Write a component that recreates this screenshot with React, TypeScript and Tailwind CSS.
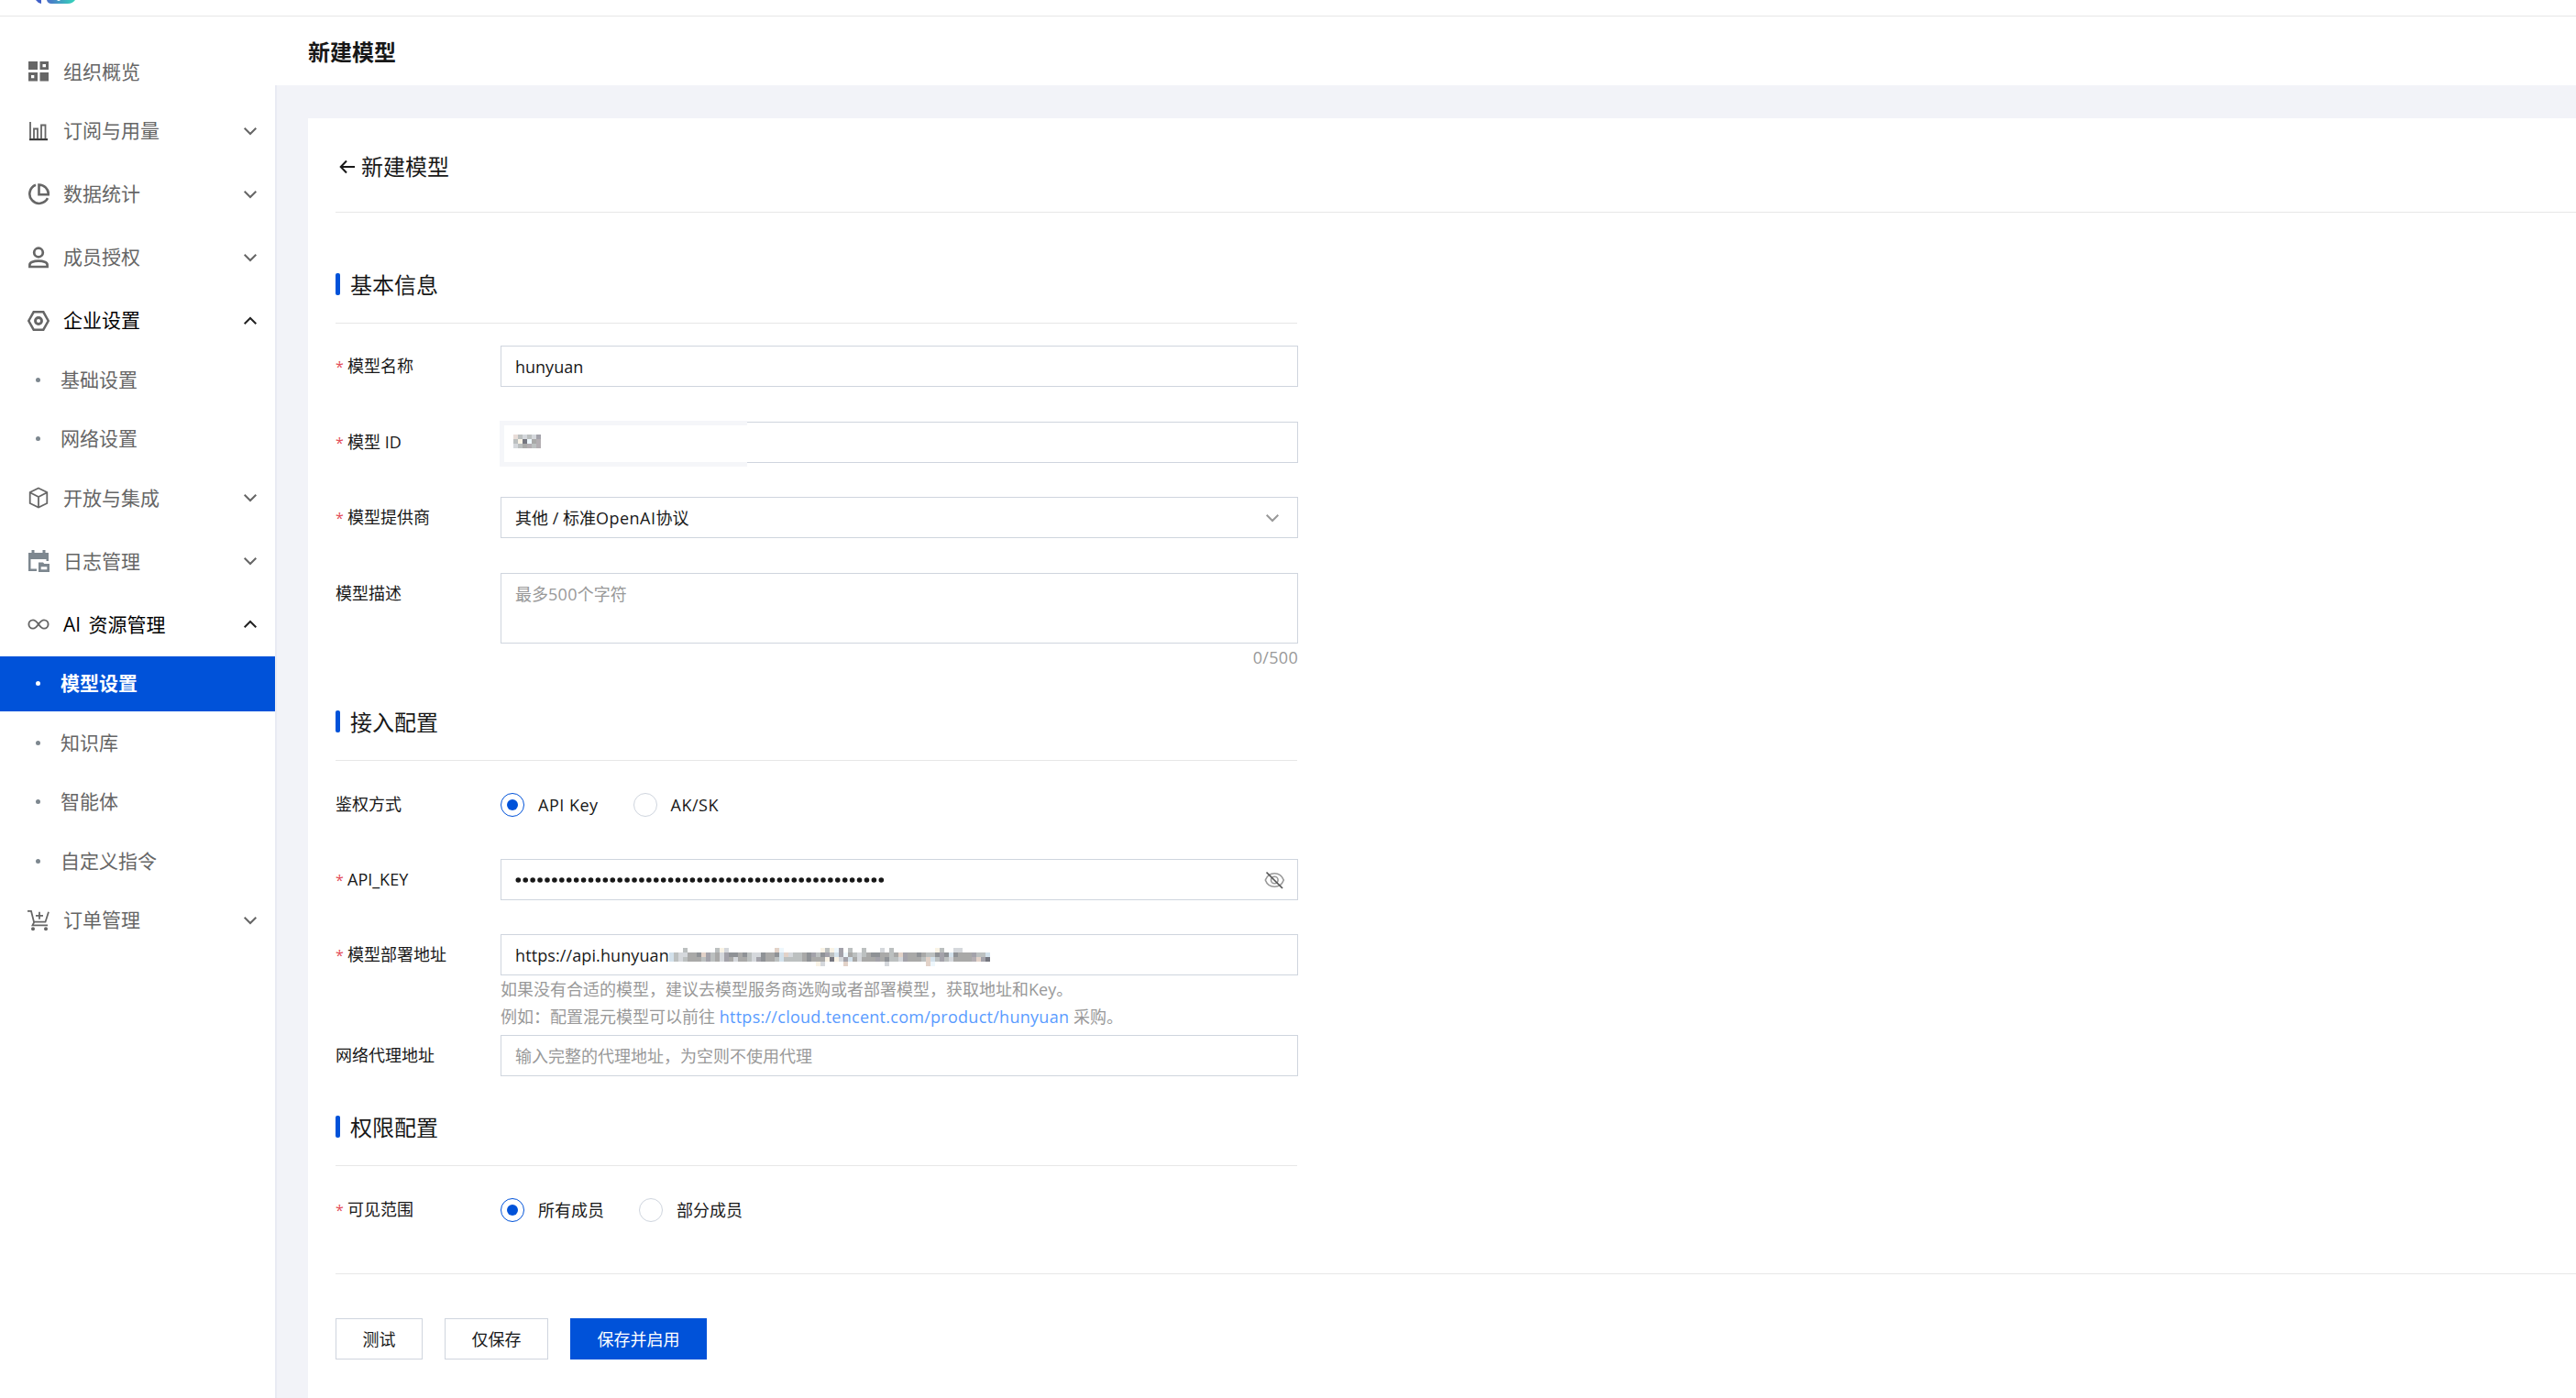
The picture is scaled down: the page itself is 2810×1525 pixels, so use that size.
import { useState, type ReactNode } from 'react'

type IconProps = { className?: string }

const Chevron = ({ up, className = '' }: { up?: boolean; className?: string }) => (
  <svg width="16" height="10" viewBox="0 0 16 10" fill="none" stroke="currentColor" strokeWidth="2" className={className}>
    <path d={up ? 'M1.7 8.2 8 2l6.3 6.2' : 'M1.7 1.8 8 8l6.3-6.2'} />
  </svg>
)

const OverviewIcon = ({ className }: IconProps) => (
  <svg width="24" height="24" viewBox="0 0 24 24" fill="currentColor" fillRule="evenodd" className={className}>
    <path d="M1 1h10v9H1zM13.500 1H23v9h-9.500zM16.500 4v3.300h3.500V4zM1 13h10v9.500H1zM4 16v3.300h3.300V16zM13.500 13H23v9.500h-9.500z" />
  </svg>
)

const UsageIcon = ({ className }: IconProps) => (
  <svg width="24" height="24" viewBox="0 0 24 24" fill="none" stroke="currentColor" strokeWidth="1.8" className={className}>
    <path d="M3 2v19h19M7 21V9.500h4V21M15 21V5.500h4.500V21" />
    <path d="M2 21.300h20" stroke="#333" />
  </svg>
)

const StatsIcon = ({ className }: IconProps) => (
  <svg width="24" height="24" viewBox="0 0 24 24" fill="none" stroke="currentColor" strokeWidth="2.6" className={className}>
    <path d="M9 1.800A10.400 10.400 0 1 0 22 16.200" />
    <path d="M12.500 1.500v10.700h10.400A10.600 10.600 0 0 0 12.500 1.500z" />
  </svg>
)

const MemberIcon = ({ className }: IconProps) => (
  <svg width="24" height="24" viewBox="0 0 24 24" fill="none" stroke="currentColor" strokeWidth="2.700" className={className}>
    <circle cx="12" cy="6.500" r="4.800" />
    <path d="M2.400 22v-2.200c0-2.600 4.300-4.200 9.600-4.200s9.600 1.600 9.600 4.200V22z" />
  </svg>
)

const SettingIcon = ({ className }: IconProps) => (
  <svg width="24" height="24" viewBox="0 0 24 24" fill="none" stroke="currentColor" strokeWidth="2.500" className={className}>
    <path d="M6.700 2.300h10.600L22.700 12l-5.400 9.700H6.700L1.300 12z" />
    <circle cx="12" cy="12" r="3.500" strokeWidth="2.900" />
  </svg>
)

const CubeIcon = ({ className }: IconProps) => (
  <svg width="24" height="24" viewBox="0 0 24 24" fill="none" stroke="currentColor" strokeWidth="1.800" className={className}>
    <path d="M12 1.500 21.300 6v12L12 22.500 2.700 18V6zM2.700 6.300 12 11l9.300-4.700M12 11v11.500" />
  </svg>
)

const LogIcon = ({ className }: IconProps) => (
  <svg width="24" height="24" viewBox="0 0 24 24" fill="#7d878f" className={className}>
    <path d="M1 3h3.500V0h3v3h9V0h3v3H23v9h-2.500V10h-17v10.500H10V23H1z" />
    <path fillRule="evenodd" d="M12 13.500h5l1.300 1.500H24v9H12zM14.700 18.200v3h6.600v-3z" />
  </svg>
)

const InfinityIcon = ({ className }: IconProps) => (
  <svg width="24" height="24" viewBox="0 0 24 24" fill="none" stroke="currentColor" strokeWidth="1.900" className={className}>
    <path d="M12 12c-2-2.800-3.600-4.600-6-4.600a4.600 4.600 0 0 0 0 9.200c2.400 0 4-1.800 6-4.600s3.600-4.600 6-4.600a4.600 4.600 0 0 1 0 9.200c-2.400 0-4-1.800-6-4.600z" />
  </svg>
)

const OrderIcon = ({ className }: IconProps) => (
  <svg width="24" height="24" viewBox="0 0 24 24" fill="none" stroke="currentColor" strokeWidth="1.800" className={className}>
    <path d="M0 1.800h4L7 13.700h12.500L23 2.800M7.400 13.700 5.500 17.300H22M13 2.800v8M9 6.800h8" />
    <circle cx="6" cy="21.300" r="2" fill="currentColor" stroke="none" />
    <circle cx="20" cy="21.300" r="2" fill="currentColor" stroke="none" />
  </svg>
)

const EyeOffIcon = () => (
  <svg width="24" height="24" viewBox="0 0 24 24" fill="none" stroke="#999" strokeWidth="1.600">
    <path d="M2.300 12C4 7.500 7.800 4.700 12.300 4.700S20.600 7.500 22.300 12c-1.700 4.500-5.500 7.300-10 7.300S4 16.500 2.300 12z" />
    <circle cx="12.300" cy="12" r="3.800" />
    <path d="M3.500 3.500 21 21" stroke="#555" strokeWidth="1.700" />
  </svg>
)

type Group = {
  label: string
  icon: (p: IconProps) => ReactNode
  leaf?: boolean
  children?: string[]
}

const menu: Group[] = [
  { label: '组织概览', icon: OverviewIcon, leaf: true },
  { label: '订阅与用量', icon: UsageIcon },
  { label: '数据统计', icon: StatsIcon },
  { label: '成员授权', icon: MemberIcon },
  { label: '企业设置', icon: SettingIcon, children: ['基础设置', '网络设置'] },
  { label: '开放与集成', icon: CubeIcon },
  { label: '日志管理', icon: LogIcon },
  { label: 'AI 资源管理', icon: InfinityIcon, children: ['模型设置', '知识库', '智能体', '自定义指令'] },
  { label: '订单管理', icon: OrderIcon },
]

function Sidebar() {
  const active = '模型设置'
  return (
    <aside className="w-[302px] shrink-0 border-r-2 border-[#e9ebf3] bg-white pt-[30px] text-[21px] text-[#666]">
      {menu.map(({ label, icon: Icon, leaf, children }) => (
        <div key={label} className={leaf || children ? '' : 'pb-[4.5px]'}>
          <div className="mb-[4.5px] flex h-[60px] items-center pl-[30px] pr-[19px]">
            <Icon className="mr-[15px] shrink-0" />
            <span className={children ? 'pt-px text-black [word-spacing:3px]' : 'pt-px'}>{label}</span>
            {!leaf && <Chevron up={!!children} className={children ? 'ml-auto text-[#222]' : 'ml-auto'} />}
          </div>
          {children?.map((name) => (
            <div
              key={name}
              className={
                name === active
                  ? 'mb-[4.5px] flex h-[60px] items-center bg-[#0052d9] pl-[39px] font-bold text-white'
                  : 'mb-[4.5px] flex h-[60px] items-center pl-[39px]'
              }
            >
              <i className={name === active ? 'mr-[22px] size-[5px] rounded-full bg-white' : 'mr-[22px] size-[5px] rounded-full bg-[#7d878f]'} />
              <span className="pt-px">{name}</span>
            </div>
          ))}
        </div>
      ))}
    </aside>
  )
}

const tones: Record<string, string> = {
  b: '#d3e1eb',
  c: '#bcc0c0',
  g: '#a9a9a8',
  d: '#8f9296',
  p: '#a3a2aa',
  e: '#d5d8dc',
  t: '#e2d2c8',
  y: '#f9f3e6',
  k: '#75767f',
  w: '#eef7fc',
  r: '#e8ddd8',
  h: '#b3aeb2',
}

// one character per 5px cell
const idMask = ['rcecep', 'cykwgh', 'ecghch']
const urlMask = [
  '...c......cye..........tw........ycywp.c..c...e.c.........yc..ee......',
  'bceeggdtpcgepddgdceedggdbteccgdpcdpcbpwgcecgddggcgtpggdgccdpdbdgggpccb',
  'bcecgggcpcgepgeggcepdggcbccccgdgggykyepbgegggpgdccepgggctbcpcegggghtpk',
  '................................ye....t........e........tw............',
]

const Mosaic = ({ rows, className = '' }: { rows: string[]; className?: string }) => (
  <svg width={rows[0].length * 5} height={rows.length * 5} shapeRendering="crispEdges" className={className}>
    {rows.flatMap((row, y) =>
      [...row].map((c, x) =>
        c === '.' ? null : <rect key={`${x}-${y}`} x={x * 5} y={y * 5} width="5" height="5" fill={tones[c]} />
      )
    )}
  </svg>
)

const Section = ({ title, className = '' }: { title: string; className?: string }) => (
  <div className={`flex w-[1049px] border-b border-[#e7e7e7] ${className}`}>
    <span className="mt-px h-6 w-[5px] rounded-[2px] bg-[#0052d9]" />
    <h3 className="ml-[11px] h-[55px] text-[24px] leading-[27px]">{title}</h3>
  </div>
)

function Row({ label, required, className = '', labelClass = 'leading-[45px]', children }: {
  label: string
  required?: boolean
  className?: string
  labelClass?: string
  children: ReactNode
}) {
  return (
    <div className={`flex ${className}`}>
      <label className={`w-[180px] shrink-0 ${labelClass}`}>
        {required && <span className="inline-block w-[13px] text-[16px] leading-none text-[#e34d59]">*</span>}
        {label}
      </label>
      <div className="w-[870px]">{children}</div>
    </div>
  )
}

const Box = ({ className = '', children }: { className?: string; children?: ReactNode }) => (
  <div className={`flex h-[45px] items-center border border-[#cfd5de] bg-white px-[15px] ${className}`}>{children}</div>
)

function Radios({ options }: { options: string[] }) {
  const [value, setValue] = useState(options[0])
  return (
    <div className="flex h-[26px] gap-[38px]">
      {options.map((o) => (
        <button key={o} onClick={() => setValue(o)} className="flex items-center gap-[15px] leading-[26px]">
          {o === value ? (
            <span className="grid size-[26px] place-items-center rounded-full border border-[#0052d9]">
              <span className="size-3 rounded-full bg-[#0052d9]" />
            </span>
          ) : (
            <span className="size-[26px] rounded-full border border-[#cfd5de]" />
          )}
          <span className={/^A/.test(o) ? 'tracking-[0.5px]' : ''}>{o}</span>
        </button>
      ))}
    </div>
  )
}

const Button = ({ primary, className, children }: { primary?: boolean; className: string; children: ReactNode }) => (
  <button className={`h-[45px] border pt-px ${primary ? 'border-[#0052d9] bg-[#0052d9] text-white' : 'border-[#cfd5de] bg-white'} ${className}`}>
    {children}
  </button>
)

export default function App() {
  return (
    <div className="flex h-[1525px] w-[2810px] flex-col overflow-hidden bg-white font-['Open_Sans','Noto_Sans_CJK_SC',sans-serif] text-[18px] text-[#181818]">
      <header className="h-[18px] shrink-0 border-b border-[#e7e7e7] pl-[38px]">
        <svg width="46" height="4" viewBox="0 0 46 4">
          <defs>
            <linearGradient id="logo" x1="0" x2="1">
              <stop offset="0" stopColor="#4c6fc9" />
              <stop offset="1" stopColor="#35d6bb" />
            </linearGradient>
          </defs>
          <path d="M1 0h6v4Q3 3 1 0z" fill="#4060c8" />
          <path d="M13 0h31q-3 4-8 4H18q-4 0-5-4z" fill="url(#logo)" />
          <path d="M24 0h4q-2 2-4 0z" fill="#fff" />
        </svg>
      </header>
      <div className="flex min-h-0 flex-1">
        <Sidebar />
        <main className="flex min-w-0 flex-1 flex-col bg-[#f2f3f8]">
          <h1 className="-ml-0.5 h-[75px] shrink-0 bg-white pl-9 pt-[3px] text-[24px] font-bold leading-[72px]">新建模型</h1>
          <section className="ml-[34px] mt-9 flex-1 bg-white pl-[30px]">
            <div className="flex h-[103px] items-center gap-1.5 border-b border-[#e7e7e7] pl-1 pt-1 text-[24px]">
              <svg width="18" height="16" viewBox="0 0 18 16" fill="none" stroke="currentColor" strokeWidth="2">
                <path d="M17 8H2M8 1.500 1.700 8 8 14.500" />
              </svg>
              <h2>新建模型</h2>
            </div>

            <Section title="基本信息" className="mt-[65px]" />
            <Row label="模型名称" required className="mt-6">
              <Box className="pt-px">hunyuan</Box>
            </Row>
            <Row label="模型 ID" required className="mt-[38px]">
              <Box className="relative">
                <span className="absolute -left-0.5 -top-0.5 h-[50px] w-[270px] border-y-[5px] border-l-[5px] border-[#f5f6f9] bg-white" />
                <Mosaic rows={idMask} className="relative -left-0.5 -top-px" />
              </Box>
            </Row>
            <Row label="模型提供商" required className="mt-[37px]">
              <Box className="justify-between pr-[19px] pt-px">
                <span>
                  其他 / 标准<span className="tracking-[0.5px]">OpenAI</span>协议
                </span>
                <Chevron className="text-[#999]" />
              </Box>
            </Row>
            <Row label="模型描述" className="mt-[38px]">
              <div className="h-[77px] border border-[#cfd5de] px-[15px] leading-[45px] text-[#999]">
                最多<span className="tracking-[0.3px]">500</span>个字符
              </div>
              <div className="text-right leading-[30px] tracking-[0.3px] text-[#999]">0/500</div>
            </Row>

            <Section title="接入配置" className="mt-[42px]" />
            <Row label="鉴权方式" className="mt-[35px]" labelClass="leading-[24px]">
              <Radios options={['API Key', 'AK/SK']} />
            </Row>
            <Row label="API_KEY" required className="mt-[46px]">
              <Box className="justify-between pr-[13px] pt-px">
                <svg width="404" height="6" fill="currentColor">
                  {Array.from({ length: 51 }).map((_, i) => (
                    <circle key={i} cx={3.3 + i * 7.92} cy="3" r="2.8" />
                  ))}
                </svg>
                <EyeOffIcon />
              </Box>
            </Row>
            <Row label="模型部署地址" required className="mt-[37px]">
              <Box>
                <span className="w-[168px] whitespace-nowrap pt-px tracking-[0.1px]">https://api.hunyuan</span>
                <Mosaic rows={urlMask} className="mt-[5px]" />
              </Box>
              <p className="leading-[30px] text-[#999]">
                如果没有合适的模型，建议去模型服务商选购或者部署模型，获取地址和Key。
                <br />
                例如：配置混元模型可以前往 <a className="tracking-[0.27px] text-[#5a9cff]">https://cloud.tencent.com/product/hunyuan</a> 采购。
              </p>
            </Row>
            <Row label="网络代理地址" className="mt-[5px]">
              <Box className="pt-px text-[#999]">输入完整的代理地址，为空则不使用代理</Box>
            </Row>

            <Section title="权限配置" className="mt-[42px]" />
            <Row label="可见范围" required className="mt-[35px]" labelClass="leading-[24px]">
              <Radios options={['所有成员', '部分成员']} />
            </Row>

            <div className="mt-14 flex gap-6 border-t border-[#e7e7e7] pt-12">
              <Button className="w-[95px]">测试</Button>
              <Button className="w-[113px]">仅保存</Button>
              <Button primary className="w-[149px]">保存并启用</Button>
            </div>
          </section>
        </main>
      </div>
    </div>
  )
}
